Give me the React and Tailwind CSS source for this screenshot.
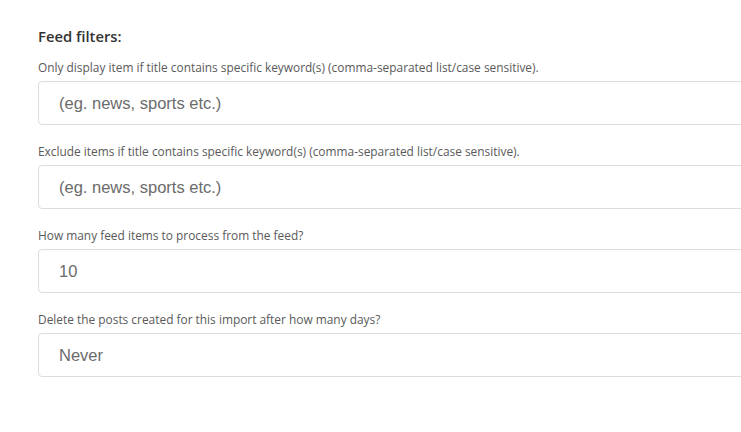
export default function App() {
  const groups = [
    { label: "Only display item if title contains specific keyword(s) (comma-separated list/case sensitive).", value: "(eg. news, sports etc.)" },
    { label: "Exclude items if title contains specific keyword(s) (comma-separated list/case sensitive).", value: "(eg. news, sports etc.)" },
    { label: "How many feed items to process from the feed?", value: "10" },
    { label: "Delete the posts created for this import after how many days?", value: "Never" },
  ];
  return (
    <div className="w-[741px] h-[432px] overflow-hidden bg-white">
      <div className="pl-[38px] pt-[26px]">
        <div className="text-[14.8px] font-semibold text-[#333] leading-[20px] mb-[13px]" style={{ fontFamily: '"Open Sans", sans-serif' }}>
          Feed filters:
        </div>
        <div className="flex flex-col gap-[18px]">
          {groups.map((g, i) => (
            <div key={i} className="flex flex-col">
              <div className="text-[11.9px] text-[#5a5a5a] leading-[16px] mb-[6px] whitespace-nowrap" style={{ fontFamily: '"Open Sans", sans-serif' }}>
                {g.label}
              </div>
              <div className="w-[740px] h-[44px] border border-[#ddd] rounded-[4px] flex items-center pl-[20px] text-[16.5px] text-[#6b6b6b]" style={{ fontFamily: '"Liberation Sans", Arial, sans-serif' }}>
                {g.value}
              </div>
            </div>
          ))}
        </div>
      </div>
    </div>
  );
}
